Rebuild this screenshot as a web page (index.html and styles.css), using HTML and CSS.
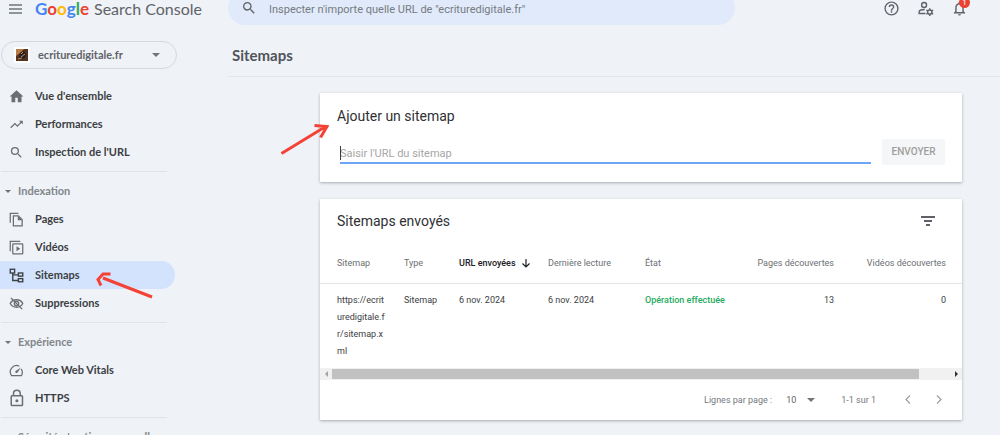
FILE: index.html
```html
<!DOCTYPE html>
<html lang="fr">
<head>
<meta charset="utf-8">
<title>Google Search Console – Sitemaps</title>
<link rel="stylesheet" href="styles.css">
</head>
<body>
<header class="topbar">
  <div class="brand">
    <button class="icon-btn" aria-label="Menu"><svg width="14" height="14" viewBox="0 0 14 14"><path d="M0 3h13M0 7h13M0 11h13" fill="none" stroke="#70757a" stroke-width="1.6"/></svg></button>
    <a class="logo" href="#"><span class="google"><span class="blue">G</span><span class="red">o</span><span class="yellow">o</span><span class="blue">g</span><span class="green">l</span><span class="red">e</span></span><span class="product">Search Console</span></a>
  </div>
  <label class="search">
    <svg width="16" height="16" viewBox="0 0 24 24"><path fill="#5f6368" d="M15.5 14h-.79l-.28-.27A6.47 6.47 0 0 0 16 9.5 6.5 6.5 0 1 0 9.5 16c1.61 0 3.09-.59 4.23-1.57l.27.28v.79l5 4.99L20.49 19zm-6 0C7.01 14 5 11.99 5 9.5S7.01 5 9.5 5 14 7.01 14 9.5 11.99 14 9.5 14z"/></svg>
    <input class="search-input" type="text" aria-label="Inspecter une URL" placeholder="Inspecter n'importe quelle URL de &quot;ecrituredigitale.fr&quot;">
  </label>
  <div class="tools">
    <button class="icon-btn" aria-label="Aide"><svg width="17" height="17" viewBox="0 0 24 24"><path fill="#5f6368" d="M11 18h2v-2h-2zm1-16a10 10 0 1 0 0 20 10 10 0 0 0 0-20m0 18c-4.41 0-8-3.59-8-8s3.59-8 8-8 8 3.59 8 8-3.59 8-8 8m0-14a4 4 0 0 0-4 4h2c0-1.1.9-2 2-2s2 .9 2 2c0 2-3 1.750-3 5h2c0-2.250 3-2.500 3-5a4 4 0 0 0-4-4"/></svg></button>
    <button class="icon-btn" aria-label="Utilisateurs et autorisations"><svg width="17" height="17" viewBox="0 0 24 24"><g fill="none" stroke="#5f6368" stroke-width="2"><circle cx="10" cy="7" r="3.500"/><path d="M12 19H3v-2c0-2 3-3.500 8-3.500"/><circle cx="18" cy="17" r="3"/><path d="M18 11.500v2.500M18 20v2.500M13.200 14.200l2.200 1.300M20.600 18.500l2.200 1.300M13.200 19.800l2.200-1.300M20.600 15.500l2.200-1.300"/></g></svg></button>
    <button class="icon-btn bell" aria-label="Notifications"><svg width="17" height="17" viewBox="0 0 24 24"><path fill="#5f6368" d="M12 22c1.100 0 2-.9 2-2h-4c0 1.100.9 2 2 2m6-6v-5c0-3.070-1.630-5.640-4.500-6.320V4a1.500 1.500 0 0 0-3 0v.68C7.640 5.360 6 7.920 6 11v5l-2 2v1h16v-1zm-2 1H8v-6c0-2.480 1.510-4.500 4-4.500s4 2.020 4 4.500z"/></svg><span class="badge">1</span></button>
  </div>
</header>
<div class="layout">
  <nav class="sidebar" aria-label="Navigation">
    <button class="property">
      <span class="favicon"><svg width="12" height="12" viewBox="0 0 12 12"><rect width="12" height="12" fill="#513320"/><path d="M0 0h8L4 4 0 7z" fill="#b77b45"/><path d="M3 8l1-4 4-2 2 3-1 4-3 1z" fill="#2b2020"/><path d="M5 5l2-2M5 8l4-3M2 10l4-1" stroke="#c4915d"/></svg></span>
      <span class="property-name">ecrituredigitale.fr</span>
      <span class="caret"></span>
    </button>
    <div class="group">
      <a class="item" href="#"><svg width="15" height="15" viewBox="0 0 24 24"><path fill="#6b6f73" d="M10 21v-7h4v7h6v-9h3L12 2 1 12h3v9z"/></svg>Vue d'ensemble</a>
      <a class="item" href="#"><svg width="15" height="15" viewBox="0 0 24 24"><path fill="#6b6f73" d="m16 6 2.290 2.290-4.880 4.880-4-4L2 16.590 3.410 18l6-6 4 4 6.300-6.290L22 12V6z"/></svg>Performances</a>
      <a class="item" href="#"><svg width="15" height="15" viewBox="0 0 24 24"><path fill="#6b6f73" d="M15.500 14h-.79l-.28-.27A6.470 6.470 0 0 0 16 9.500 6.500 6.500 0 1 0 9.500 16c1.610 0 3.090-.59 4.230-1.570l.27.28v.79l5 4.990L20.490 19zm-6 0C7.010 14 5 11.990 5 9.500S7.010 5 9.500 5 14 7.010 14 9.500 11.990 14 9.500 14z"/></svg>Inspection de l'URL</a>
    </div>
    <div class="group">
      <button class="heading"><span class="caret small"></span>Indexation</button>
      <a class="item" href="#"><svg width="15" height="15" viewBox="0 0 24 24"><g fill="none" stroke="#6b6f73" stroke-width="2"><path d="M2 17V2h13"/><path d="M7 6h8l6 6v10H7z"/></g><path d="M14 6v7h7z" fill="#6b6f73"/></svg>Pages</a>
      <a class="item" href="#"><svg width="15" height="15" viewBox="0 0 24 24"><g fill="none" stroke="#6b6f73" stroke-width="2"><path d="M2 18V2h16"/><rect x="6" y="6" width="16" height="16" rx="1"/></g><path d="M12 10v8l6-4z" fill="#6b6f73"/></svg>Vidéos</a>
      <a class="item active" href="#" aria-current="page"><svg width="15" height="15" viewBox="0 0 24 24"><g fill="none" stroke="#3c4043" stroke-width="2.200"><rect x="2" y="2" width="7" height="6"/><rect x="15" y="8" width="7" height="5"/><rect x="15" y="17" width="7" height="5"/><path d="M6 8v12h9M6 11h9"/></g></svg>Sitemaps</a>
      <a class="item" href="#"><svg width="15" height="15" viewBox="0 0 24 24"><g fill="none" stroke="#6b6f73" stroke-width="2.200"><path d="M2 12c4-8 16-8 20 0-4 8-16 8-20 0z"/><circle cx="12" cy="12" r="3.500"/><path d="M3 3l18 18"/></g></svg>Suppressions</a>
    </div>
    <div class="group">
      <button class="heading"><span class="caret small"></span>Expérience</button>
      <a class="item" href="#"><svg width="15" height="15" viewBox="0 0 24 24"><path d="M19.500 9.500A10 10 0 0 1 20 20H4A10 10 0 0 1 16.500 5.200" fill="none" stroke="#6b6f73" stroke-width="2"/><path d="M10.600 15.400a2 2 0 0 0 2.800 0L19 7l-8.400 5.600a2 2 0 0 0 0 2.800" fill="#6b6f73"/></svg>Core Web Vitals</a>
      <a class="item" href="#"><svg width="15" height="18" viewBox="0 0 20 24"><g fill="none" stroke="#6b6f73" stroke-width="2"><rect x="3" y="9" width="15" height="13" rx="1"/><path d="M6 9V6a4.500 4.500 0 0 1 9 0v3"/></g><circle cx="10.500" cy="15.500" r="2" fill="#6b6f73"/></svg>HTTPS</a>
    </div>
    <div class="group">
      <button class="heading"><span class="caret small"></span>Sécurité et actions manuelles</button>
    </div>
  </nav>
  <main class="main">
    <h1 class="page-title">Sitemaps</h1>
    <div class="cards">
      <section class="card add-card">
        <h2 class="card-title">Ajouter un sitemap</h2>
        <form class="add-form">
          <div class="field"><input class="url-input" type="text" aria-label="URL du sitemap" placeholder="Saisir l'URL du sitemap"></div>
          <button class="submit" type="button" disabled>ENVOYER</button>
        </form>
      </section>
      <section class="card">
        <div class="card-head">
          <h2 class="card-title">Sitemaps envoyés</h2>
          <button class="icon-btn" aria-label="Filtrer"><svg width="14" height="10" viewBox="0 0 14 10"><path d="M0 1h14M3 5h8M5 9h4" fill="none" stroke="#5f6368" stroke-width="2"/></svg></button>
        </div>
        <table class="table">
          <colgroup><col class="c-map"><col class="c-type"><col class="c-sent"><col class="c-read"><col class="c-state"><col class="c-pages"><col></colgroup>
          <thead>
            <tr><th>Sitemap</th><th>Type</th><th class="sorted">URL envoyées<svg class="sort" width="8" height="9" viewBox="0 0 8 9"><path d="M4 0v8M0.500 4.500L4 8l3.500-3.500" fill="none" stroke="#202124" stroke-width="1.200"/></svg></th><th>Dernière lecture</th><th>État</th><th class="num">Pages découvertes</th><th class="num">Vidéos découvertes</th></tr>
          </thead>
          <tbody>
            <tr><td class="url">https://ecrituredigitale.fr/sitemap.xml</td><td>Sitemap</td><td>6 nov. 2024</td><td>6 nov. 2024</td><td class="ok">Opération effectuée</td><td class="num">13</td><td class="num">0</td></tr>
          </tbody>
        </table>
        <div class="scrollbar"><span class="arrow left"></span><span class="track"><span class="thumb"></span></span><span class="arrow right"></span></div>
        <div class="pager">
          <label for="rows">Lignes par page :</label>
          <span class="select-wrap"><select id="rows" class="rows"><option>10</option><option>25</option></select><span class="caret"></span></span>
          <span>1-1 sur 1</span>
          <span class="page-nav">
            <button class="icon-btn" aria-label="Page précédente"><svg width="6" height="9" viewBox="0 0 6 9"><path d="M5 .5l-4 4 4 4" fill="none" stroke="#9e9e9e" stroke-width="1.200"/></svg></button>
            <button class="icon-btn" aria-label="Page suivante"><svg width="6" height="9" viewBox="0 0 6 9"><path d="M1 .5l4 4-4 4" fill="none" stroke="#9e9e9e" stroke-width="1.200"/></svg></button>
          </span>
        </div>
      </section>
    </div>
  </main>
</div>
<svg class="mark mark-form" width="50" height="36" viewBox="0 0 50 36"><path d="M2.500 33.500L45 7.500M35.500 5.500L48 6.500 41.500 17.500" fill="none" stroke="#f44336" stroke-width="3"/></svg>
<svg class="mark mark-nav" width="60" height="30" viewBox="0 0 60 30"><path d="M8 8l49 19M15.500 4H8L3 9.500l3 6" fill="none" stroke="#f44336" stroke-width="3"/></svg>
</body>
</html>
```
FILE: styles.css
```css
* { box-sizing: border-box; }
body {
  margin: 0;
  height: 100vh;
  overflow: hidden;
  position: relative;
  background: #eff2f7;
  color: #3c4043;
  font: 11px/16px Roboto, sans-serif;
}
button, input, select { font: inherit; color: inherit; border: 0; padding: 0; margin: 0; background: none; outline: 0; }
a { color: inherit; text-decoration: none; }
h1, h2 { margin: 0; font-weight: 400; }
svg { display: block; flex: none; }
.icon-btn { display: flex; position: relative; }

/* The bar starts above the window edge, as when slightly scrolled. */
.topbar { display: flex; align-items: center; height: 34px; margin-top: -9px; }
.brand { display: flex; align-items: center; gap: 12px; width: 228px; flex: none; padding: 2px 0 0 9px; }
.logo { display: flex; gap: 5px; font-family: Lato, sans-serif; font-size: 17px; line-height: 24px; color: #5f6368; white-space: nowrap; }
.google { font-weight: 700; }
.product { font-size: 16px; }
.blue { color: #4285f4; }
.red { color: #ea4335; }
.yellow { color: #fbbc04; }
.green { color: #34a853; }
.search { display: flex; align-items: center; gap: 12px; flex: 1; height: 34px; padding: 0 13px; border-radius: 17px; background: #e1eafb; }
.search-input { flex: 1; height: 18px; padding-top: 2px; font-size: 11px; }
.search-input::placeholder { color: #757b81; opacity: 1; }
.tools { display: flex; gap: 17px; width: 265px; justify-content: flex-end; padding-right: 32px; }
.badge { position: absolute; left: 8px; top: -3px; width: 11px; height: 11px; border-radius: 50%; background: #e94235; color: #fff; font-size: 8px; line-height: 11px; text-align: center; }

.layout { display: flex; }
.sidebar { width: 228px; flex: none; padding-top: 16px; font-family: Lato, sans-serif; font-weight: 700; }
.property { display: flex; align-items: center; width: 176px; height: 28px; margin: 0 0 13px 1px; padding: 0 16px 0 12px; border: 1px solid #d5d8dd; border-radius: 14px; color: #5f6368; }
.favicon { padding: 2px; background: #fff; margin-right: 8px; }
.property-name { flex: 1; text-align: left; }
.caret { border: 4px solid transparent; border-top-color: #70757a; border-bottom: 0; }
.caret.small { border-width: 3px 3px 0; }
.group { width: 166px; margin-left: 1px; padding-bottom: 5px; }
.group + .group { border-top: 1px solid #e0e4e9; padding-top: 5px; }
.item { display: flex; align-items: center; gap: 11px; height: 28px; width: 175px; margin-left: -1px; padding-left: 9px; color: #3c4043; border-radius: 0 14px 14px 0; }
.item svg { width: 15px; }
.active { background: #d3e3fd; }
.heading { display: flex; align-items: center; gap: 7px; height: 28px; padding-left: 4px; color: #80868b; white-space: nowrap; }

.main { flex: 1; min-width: 0; }
.page-title { height: 52px; padding: 18px 4px 0; border-bottom: 1px solid #e3e7eb; font-family: Lato, sans-serif; font-weight: 700; font-size: 15px; line-height: 24px; color: #50545a; }
.cards { display: flex; flex-direction: column; gap: 17px; padding: 16px 38px 0 92px; }
.card { background: #fff; border-radius: 1px; box-shadow: 0 1px 3px rgba(60, 64, 67, .4); }
.add-card { padding: 12px 17px 17px; }
.card-title { font-size: 14px; line-height: 22px; color: #303134; }
.add-form { display: flex; gap: 11px; margin-top: 12px; padding-left: 3px; }
.field { flex: 1; position: relative; height: 25px; border-bottom: 2px solid #6ea4f5; }
.field::before { content: ""; position: absolute; left: 0; top: 7px; width: 1px; height: 14px; background: #3c4043; }
.url-input { width: 100%; height: 28px; }
.url-input::placeholder { color: #a6a6a6; opacity: 1; }
.submit { width: 63px; height: 26px; border-radius: 2px; background: #f5f6f7; color: #9e9e9e; font-size: 10px; font-weight: 500; }

.card-head { display: flex; justify-content: space-between; align-items: center; height: 42px; padding: 2px 27px 0 17px; }
.table { width: 100%; table-layout: fixed; border-collapse: collapse; font-size: 9px; }
.c-map { width: 84px; }
.c-type { width: 55px; }
.c-sent { width: 89px; }
.c-read { width: 97px; }
.c-state { width: 108px; }
.c-pages { width: 81px; }
.table th { height: 42px; padding: 2px 0 0; border-bottom: 1px solid #e4e4e4; text-align: left; font-weight: 400; color: #6b6f73; white-space: nowrap; }
.table td { padding: 8px 0; line-height: 17px; vertical-align: top; color: #3c4043; }
.table th:first-child, .table td:first-child { padding-left: 17px; }
.table th:last-child, .table td:last-child { padding-right: 16px; }
.table th.sorted { color: #202124; font-weight: 500; }
.sort { display: inline-block; margin-left: 6px; vertical-align: middle; }
.table .num { text-align: right; }
.table .url { padding-right: 16px; word-break: break-all; }
.table .ok { color: #1eaa60; font-weight: 500; }
.scrollbar { display: flex; align-items: center; height: 12px; background: #f1f1f1; }
.arrow { width: 12px; display: flex; justify-content: center; }
.arrow::before { content: ""; border: 3px solid transparent; }
.arrow.left::before { border-right-color: #a3a3a3; border-left: 0; }
.arrow.right::before { border-left-color: #303030; border-right: 0; }
.track { flex: 1; height: 10px; }
.thumb { display: block; width: 95%; height: 10px; background: #c1c1c1; }
.pager { display: flex; align-items: center; justify-content: flex-end; height: 40px; padding-right: 20px; font-size: 9px; color: #74797e; }
.select-wrap { display: flex; align-items: center; margin: 0 26px 0 14px; color: #5f6368; }
.rows { appearance: none; width: 21px; }
.page-nav { display: flex; gap: 25px; margin-left: 29px; }

.mark { position: absolute; pointer-events: none; }
.mark-form { left: 279px; top: 120px; }
.mark-nav { left: 95px; top: 270px; }
```
